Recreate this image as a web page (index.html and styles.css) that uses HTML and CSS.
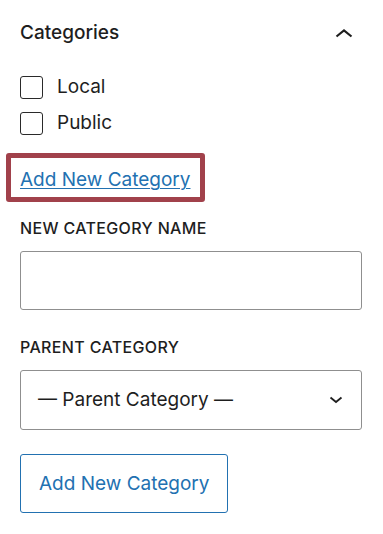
FILE: index.html
```html
<!DOCTYPE html>
<html lang="en">
<head>
<meta charset="utf-8">
<title>Categories</title>
<link rel="stylesheet" href="styles.css">
</head>
<body>
<div class="panel">
  <div class="header">
    <span class="title">Categories</span>
    <svg class="chev-up" width="18" height="10" viewBox="0 0 18 10" aria-hidden="true"><polyline points="1.5,8.5 9,2.5 16.5,8.5" fill="none" stroke="#1e1e1e" stroke-width="2.2"/></svg>
  </div>
  <div class="checks">
    <label class="check"><span class="box"></span><span class="check-label">Local</span></label>
    <label class="check"><span class="box"></span><span class="check-label">Public</span></label>
  </div>
  <div class="highlight"><a class="link" href="#">Add New Category</a></div>
  <div class="field-label">New Category Name</div>
  <div class="input"></div>
  <div class="field-label second">Parent Category</div>
  <div class="select">
    <span class="select-text">— Parent Category —</span>
    <svg class="chev-down" width="14" height="8" viewBox="0 0 14 8" aria-hidden="true"><polyline points="1.5,1.5 7,6 12.5,1.5" fill="none" stroke="#1e1e1e" stroke-width="1.8"/></svg>
  </div>
  <div class="button">Add New Category</div>
</div>
</body>
</html>
```
FILE: styles.css
```css
html, body {
  margin: 0;
  padding: 0;
  background: #ffffff;
}
body {
  font-family: Inter, "Noto Sans", "Liberation Sans", sans-serif;
  color: #1e1e1e;
}
.panel {
  padding: 0 21px 0 20px;
}
.header {
  display: flex;
  justify-content: space-between;
  align-items: center;
  padding-top: 20px;
  height: 25px;
  padding-right: 9px;
}
.title {
  font-size: 19px;
  font-weight: 500;
  line-height: 25px;
}
.chev-up {
  display: block;
}
.checks {
  display: flex;
  flex-direction: column;
  gap: 12px;
  margin-top: 30px;
}
.check {
  display: flex;
  align-items: center;
  gap: 14px;
  height: 24px;
}
.box {
  width: 21px;
  height: 21px;
  border: 1.5px solid #2a2a2a;
  border-radius: 3px;
  box-sizing: content-box;
  flex: none;
}
.check-label {
  font-size: 19px;
  line-height: 24px;
}
.highlight {
  display: inline-block;
  margin-top: 18px;
  margin-left: -14px;
  border: 5px solid #a1414b;
  border-radius: 3px;
  padding: 9px 9px 5px 9px;
}
.link {
  display: block;
  font-size: 19px;
  line-height: 25px;
  color: #2271b1;
  text-decoration: underline;
  text-underline-offset: 2px;
  text-decoration-thickness: 1px;
}
.field-label {
  margin-top: 16px;
  font-size: 16px;
  font-weight: 500;
  line-height: 20px;
  text-transform: uppercase;
  letter-spacing: 0.35px;
}
.field-label.second {
  margin-top: 27px;
}
.input {
  margin-top: 13px;
  height: 57px;
  border: 1px solid #8f8f8f;
  border-radius: 3px;
}
.select {
  margin-top: 13px;
  height: 58px;
  border: 1px solid #8f8f8f;
  border-radius: 3px;
  display: flex;
  align-items: center;
  justify-content: space-between;
  padding: 0 18px 0 17px;
}
.select-text {
  font-size: 19px;
  line-height: 24px;
}
.chev-down {
  display: block;
}
.button {
  display: inline-flex;
  align-items: center;
  justify-content: center;
  margin-top: 24px;
  height: 57px;
  padding: 0 17px 0 18px;
  border: 1px solid #2271b1;
  border-radius: 3px;
  color: #2271b1;
  font-size: 19px;
}
```
